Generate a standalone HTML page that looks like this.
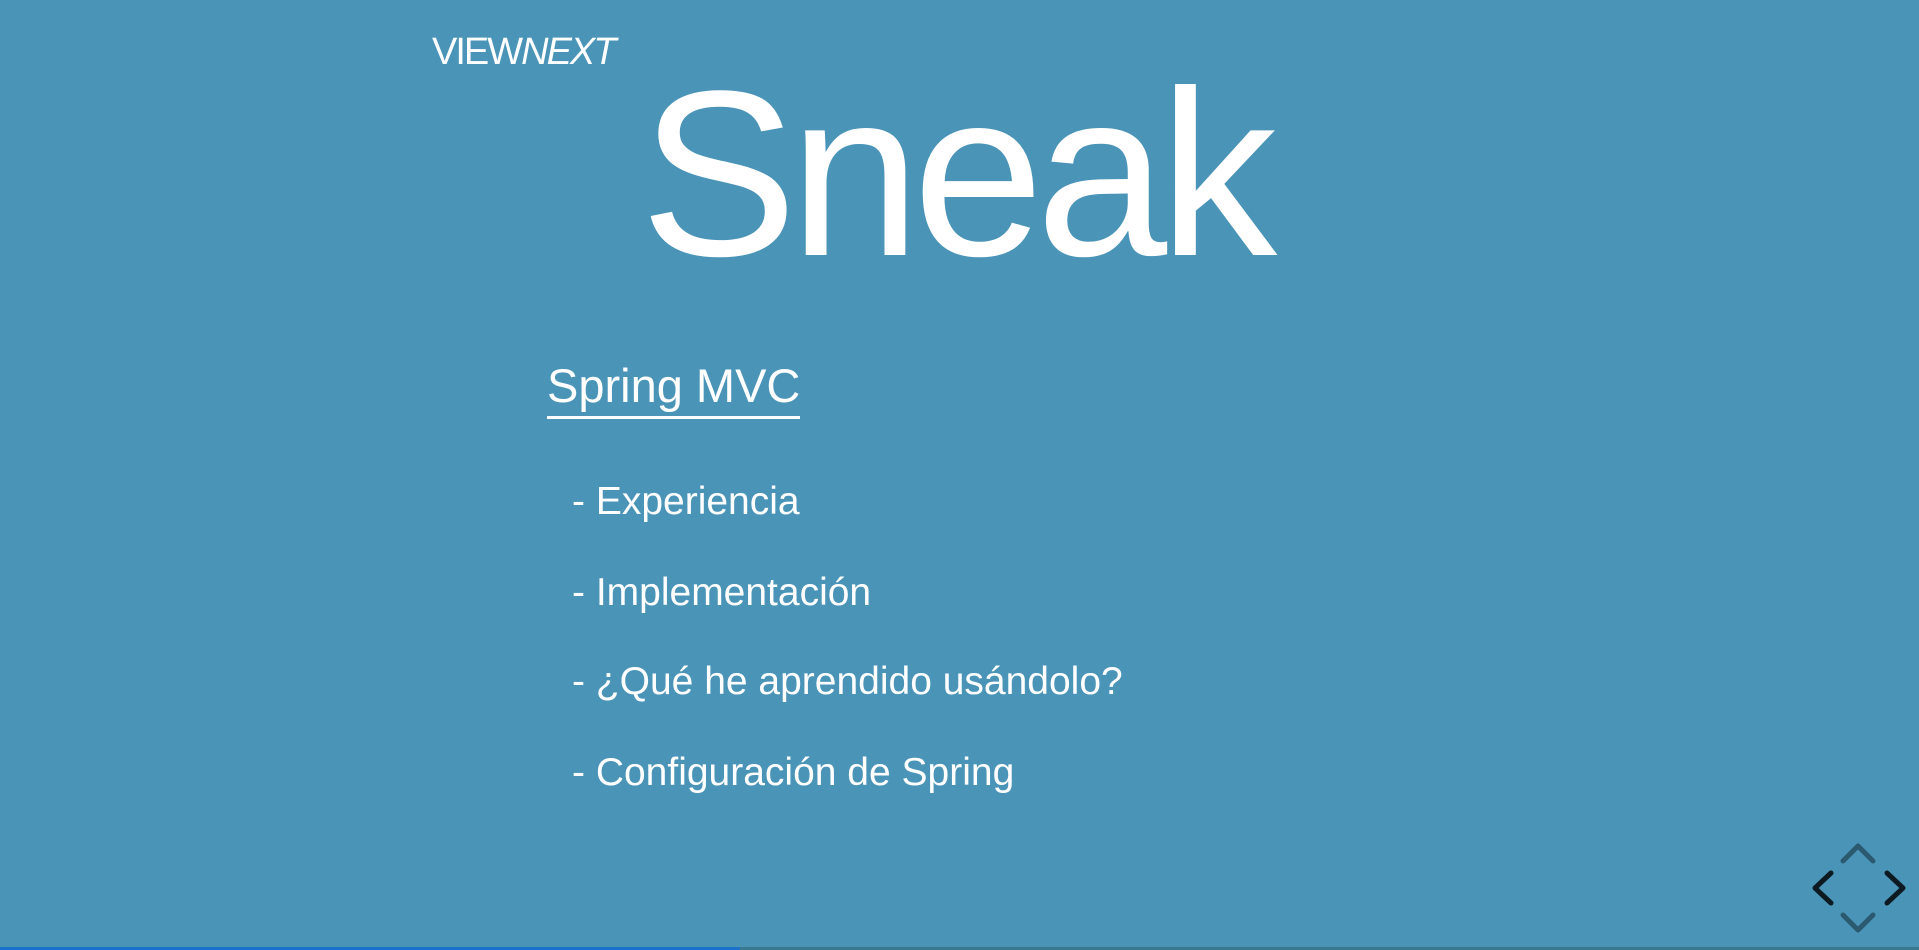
<!DOCTYPE html>
<html><head><meta charset="utf-8"><style>
html,body{margin:0;padding:0}
body{width:1919px;height:950px;background:#4a94b8;position:relative;overflow:hidden;font-family:"Liberation Sans",sans-serif;color:#fff}
.t{position:absolute;white-space:nowrap;line-height:1}
#logo{left:432px;top:33px;font-size:38px;letter-spacing:-2px}
#title{left:640px;top:56px;font-size:236px;letter-spacing:-8px}
#sub{left:547px;top:362px;font-size:47px;border-bottom:3px solid #fff;padding-bottom:7px}
.li{left:572px;font-size:39px}
#bar1{position:absolute;left:0;top:947px;width:740px;height:3px;background:#1a73c8}
#bar2{position:absolute;left:740px;top:947px;width:1179px;height:3px;background:#3a7a90}
</style></head><body>
<div class="t" id="logo">VIEW<i>NEXT</i></div>
<div class="t" id="title">Sneak</div>
<div class="t" id="sub">Spring MVC</div>
<div class="t li" style="top:482px">- Experiencia</div>
<div class="t li" style="top:573px">- Implementación</div>
<div class="t li" style="top:662px">- ¿Qué he aprendido usándolo?</div>
<div class="t li" style="top:753px">- Configuración de Spring</div>
<svg style="position:absolute;left:1800px;top:835px" width="119" height="110" viewBox="0 0 119 110" fill="none" stroke-width="5" stroke-linecap="round" stroke-linejoin="round">
<path d="M31 38 L15 53 L31 68" stroke="#0d1a22"/>
<path d="M87 38 L103 53 L87 68" stroke="#0d1a22"/>
<path d="M43 26 L58 11 L73 26" stroke="#2b5a70"/>
<path d="M43 80 L58 95 L73 80" stroke="#2b5a70"/>
</svg>
<div id="bar1"></div><div id="bar2"></div>
</body></html>
